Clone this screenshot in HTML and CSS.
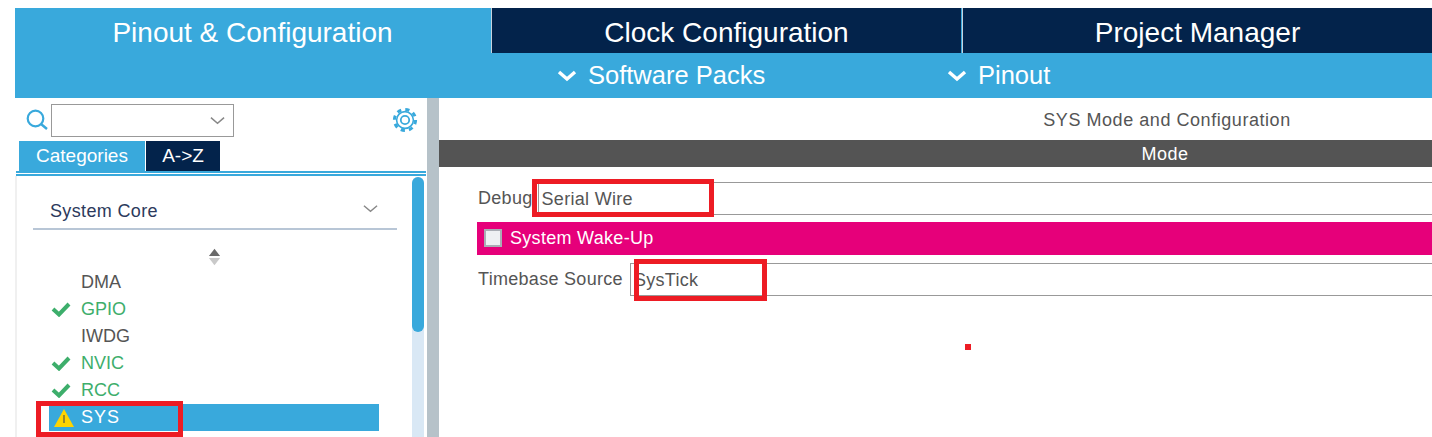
FILE: index.html
```html
<!DOCTYPE html>
<html lang="en">
<head>
<meta charset="utf-8">
<title>SYS Mode and Configuration</title>
<link rel="stylesheet" href="styles.css">
</head>
<body>
<div class="app">
  <header class="header">
    <nav class="tabs">
      <div class="tab tab-active">Pinout &amp; Configuration</div>
      <div class="tab">Clock Configuration</div>
      <div class="tab">Project Manager</div>
    </nav>
    <div class="subbar">
      <div class="subitem">
        <svg class="sub-chevron" viewBox="0 0 20 12"><path d="M2 2l8 7 8-7" fill="none" stroke="#fff" stroke-width="3.4"/></svg>
        <span>Software Packs</span>
      </div>
      <div class="subitem">
        <svg class="sub-chevron" viewBox="0 0 20 12"><path d="M2 2l8 7 8-7" fill="none" stroke="#fff" stroke-width="3.4"/></svg>
        <span>Pinout</span>
      </div>
    </div>
  </header>
  <main class="main">
    <aside class="sidebar">
      <div class="search-row">
        <svg class="search-icon" viewBox="0 0 22 22"><circle cx="9.5" cy="9.5" r="7.8" fill="none" stroke="#39a9dc" stroke-width="2.2"/><path d="M15 15l6 5" fill="none" stroke="#39a9dc" stroke-width="2.4"/></svg>
        <div class="search-box">
          <svg class="box-chevron" viewBox="0 0 16 9"><path d="M1 1.5l7 6 7-6" fill="none" stroke="#888" stroke-width="1.6"/></svg>
        </div>
        <svg class="gear-icon" viewBox="0 0 26 26"><circle cx="13" cy="13" r="10.6" fill="none" stroke="#39a9dc" stroke-width="3" stroke-dasharray="4.2 4.12"/><circle cx="13" cy="13" r="8.4" fill="none" stroke="#39a9dc" stroke-width="1.6"/><circle cx="13" cy="13" r="4.2" fill="none" stroke="#39a9dc" stroke-width="1.8"/></svg>
      </div>
      <div class="side-tabs">
        <div class="side-tab side-tab-active">Categories</div>
        <div class="side-tab">A-&gt;Z</div>
      </div>
      <div class="side-rule"></div>
      <div class="list-panel">
        <div class="list-body">
          <div class="section-head">
            <span>System Core</span>
            <svg class="section-chevron" viewBox="0 0 16 9"><path d="M1 1.5l7 6 7-6" fill="none" stroke="#888" stroke-width="1.5"/></svg>
          </div>
          <div class="sort-row">
            <svg class="sort-icon" viewBox="0 0 14 18"><path d="M7 0l6 8H1z" fill="#6a6a6a"/><path d="M7 18l-6-8h12z" fill="#c9c9c9"/></svg>
          </div>
          <ul class="items">
            <li class="item"><span class="item-icon"></span>DMA</li>
            <li class="item item-ok"><span class="item-icon"><svg class="check" viewBox="0 0 20 15"><path d="M2 7l6 5.5L18 2" fill="none" stroke="#3dae6b" stroke-width="4"/></svg></span>GPIO</li>
            <li class="item"><span class="item-icon"></span>IWDG</li>
            <li class="item item-ok"><span class="item-icon"><svg class="check" viewBox="0 0 20 15"><path d="M2 7l6 5.5L18 2" fill="none" stroke="#3dae6b" stroke-width="4"/></svg></span>NVIC</li>
            <li class="item item-ok"><span class="item-icon"><svg class="check" viewBox="0 0 20 15"><path d="M2 7l6 5.5L18 2" fill="none" stroke="#3dae6b" stroke-width="4"/></svg></span>RCC</li>
            <li class="item item-selected"><span class="item-icon"><svg class="warn" viewBox="0 0 20 18"><path d="M10 0l10 18H0z" fill="#ffd400"/><path d="M10 6v8" stroke="#9a8a2a" stroke-width="2"/></svg></span>SYS</li>
          </ul>
        </div>
        <div class="scrollbar"><div class="thumb"></div></div>
      </div>
    </aside>
    <div class="splitter"></div>
    <section class="content">
      <div class="content-inner">
        <h1 class="title">SYS Mode and Configuration</h1>
        <div class="mode-bar">Mode</div>
        <div class="field field-debug">
          <label class="field-label">Debug</label>
          <div class="select select-debug">Serial Wire</div>
        </div>
        <div class="wake">
          <span class="checkbox"></span>
          <span>System Wake-Up</span>
        </div>
        <div class="field field-time">
          <label class="field-label">Timebase Source</label>
          <div class="select select-time">SysTick</div>
        </div>
      </div>
    </section>
  </main>
</div>
<div class="mark mark-sys"></div>
<div class="mark mark-debug"></div>
<div class="mark mark-time"></div>
<div class="mark-dot"></div>
</body>
</html>
```
FILE: styles.css
```css
* { box-sizing: border-box; }
html, body { height: 100%; }
body {
  margin: 0;
  padding: 8px 0 0 15px;
  background: #fff;
  overflow: hidden;
  font-family: "Liberation Sans", Arial, sans-serif;
  color: #555;
}
.app { display: flex; flex-direction: column; height: 429px; width: 1417px; }
.header { background: #39a9dc; color: #fff; flex: none; }
.tabs { display: flex; height: 45px; }
.tab {
  background: #03234b;
  width: 469px;
  margin-left: 2px;
  font-size: 28px;
  line-height: 50px;
  text-align: center;
  box-shadow: -1px 0 0 #c8d2dc;
  overflow: hidden;
}
.tab-active { background: #39a9dc; width: 475px; margin-left: 0; box-shadow: none; }
.subbar { display: flex; height: 45px; padding-left: 542px; font-size: 25.5px; }
.subitem { display: flex; align-items: center; gap: 11px; width: 390px; }
.sub-chevron { width: 20px; height: 12px; }
.main { display: flex; flex: 1; min-height: 0; }
.sidebar { width: 412px; flex: none; display: flex; flex-direction: column; overflow: hidden; }
.search-row { display: flex; align-items: center; height: 43px; padding-left: 11px; flex: none; }
.search-icon { width: 22px; height: 22px; margin-top: 1px; }
.search-box {
  width: 183px;
  height: 33px;
  margin-left: 3px;
  margin-top: 1px;
  border: 1px solid #999;
  display: flex;
  align-items: center;
  justify-content: flex-end;
  padding-right: 8px;
}
.box-chevron { width: 15px; height: 9px; }
.gear-icon { width: 26px; height: 26px; margin-left: 158px; }
.side-tabs { display: flex; height: 30px; padding-left: 4px; gap: 1px; flex: none; font-size: 19px; color: #fff; }
.side-tab { background: #03234b; width: 74px; line-height: 30px; text-align: center; }
.side-tab-active { background: #39a9dc; width: 126px; }
.side-rule { height: 5px; margin: 0 1px 0 1px; border-top: 2px solid #39a9dc; border-bottom: 2px solid #39a9dc; flex: none; }
.list-panel { flex: 1; display: flex; min-height: 0; border-left: 2px solid #f0f0f0; }
.list-body { flex: 1; min-width: 0; }
.section-head {
  display: flex;
  justify-content: space-between;
  align-items: center;
  margin: 0 15px 0 16px;
  padding: 25px 19px 6px 17px;
  border-bottom: 2px solid #b8c6d6;
  font-size: 18px;
  line-height: 21px;
  letter-spacing: 0.35px;
  color: #2c3a5c;
}
.section-chevron { width: 15px; height: 9px; margin-top: -6px; }
.sort-row { display: flex; justify-content: center; margin-top: 18px; height: 21px; }
.sort-icon { width: 13px; height: 18px; }
.items { list-style: none; margin: 0 0 0 32px; padding: 0; width: 330px; }
.item { display: flex; align-items: center; height: 27px; font-size: 18px; color: #555; }
.item-icon { width: 32px; flex: none; display: flex; align-items: center; padding-left: 2px; }
.item-ok { color: #3dae6b; }
.item-selected { background: #39a9dc; color: #fff; letter-spacing: 1px; }
.check { width: 20px; height: 15px; }
.warn { width: 20px; height: 18px; margin-left: 3px; }
.scrollbar { width: 12px; flex: none; margin: 1px 3px 0 0; background: #d9e8f5; border-radius: 6px 6px 0 0; }
.thumb { height: 155px; background: #39a9dc; border-radius: 6px; }
.splitter { width: 12px; flex: none; background: #b6c2c9; }
.content { flex: 1; min-width: 0; overflow: hidden; }
.content-inner { width: 1452px; }
.title { margin: 0; height: 42px; font-size: 18px; font-weight: 400; line-height: 44px; text-align: center; padding-left: 4px; letter-spacing: 0.55px; color: #555; }
.mode-bar { height: 27px; background: #545454; color: #fff; font-size: 18px; line-height: 29px; text-align: center; letter-spacing: 0.5px; }
.field { display: flex; align-items: center; margin-left: 39px; font-size: 18px; letter-spacing: 0.3px; }
.field-debug { margin-top: 15px; }
.field-time { margin-top: 8px; }
.field-label { color: #555; }
.select { flex: 1; height: 33px; line-height: 33px; border: 1px solid #999; border-right: 0; padding-left: 3px; }
.select-debug { margin-left: 5px; }
.select-time { margin-left: 7px; }
.wake {
  display: flex;
  align-items: center;
  height: 33px;
  margin: 7px 0 0 38px;
  padding-left: 7px;
  background: #e6007a;
  color: #fff;
  font-size: 18px;
  letter-spacing: 0.3px;
  gap: 8px;
}
.checkbox { width: 18px; height: 18px; background: #eef0f3; border: 2px solid #a9adb5; margin-top: -1px; }
.mark { position: absolute; border: 5px solid #ed1c24; }
.mark-sys { left: 36px; top: 401px; width: 147px; height: 36px; }
.mark-debug { left: 532px; top: 179px; width: 182px; height: 38px; }
.mark-time { left: 634px; top: 259px; width: 133px; height: 42px; }
.mark-dot { position: absolute; left: 965px; top: 344px; width: 6px; height: 6px; background: #ed1c24; }
```
